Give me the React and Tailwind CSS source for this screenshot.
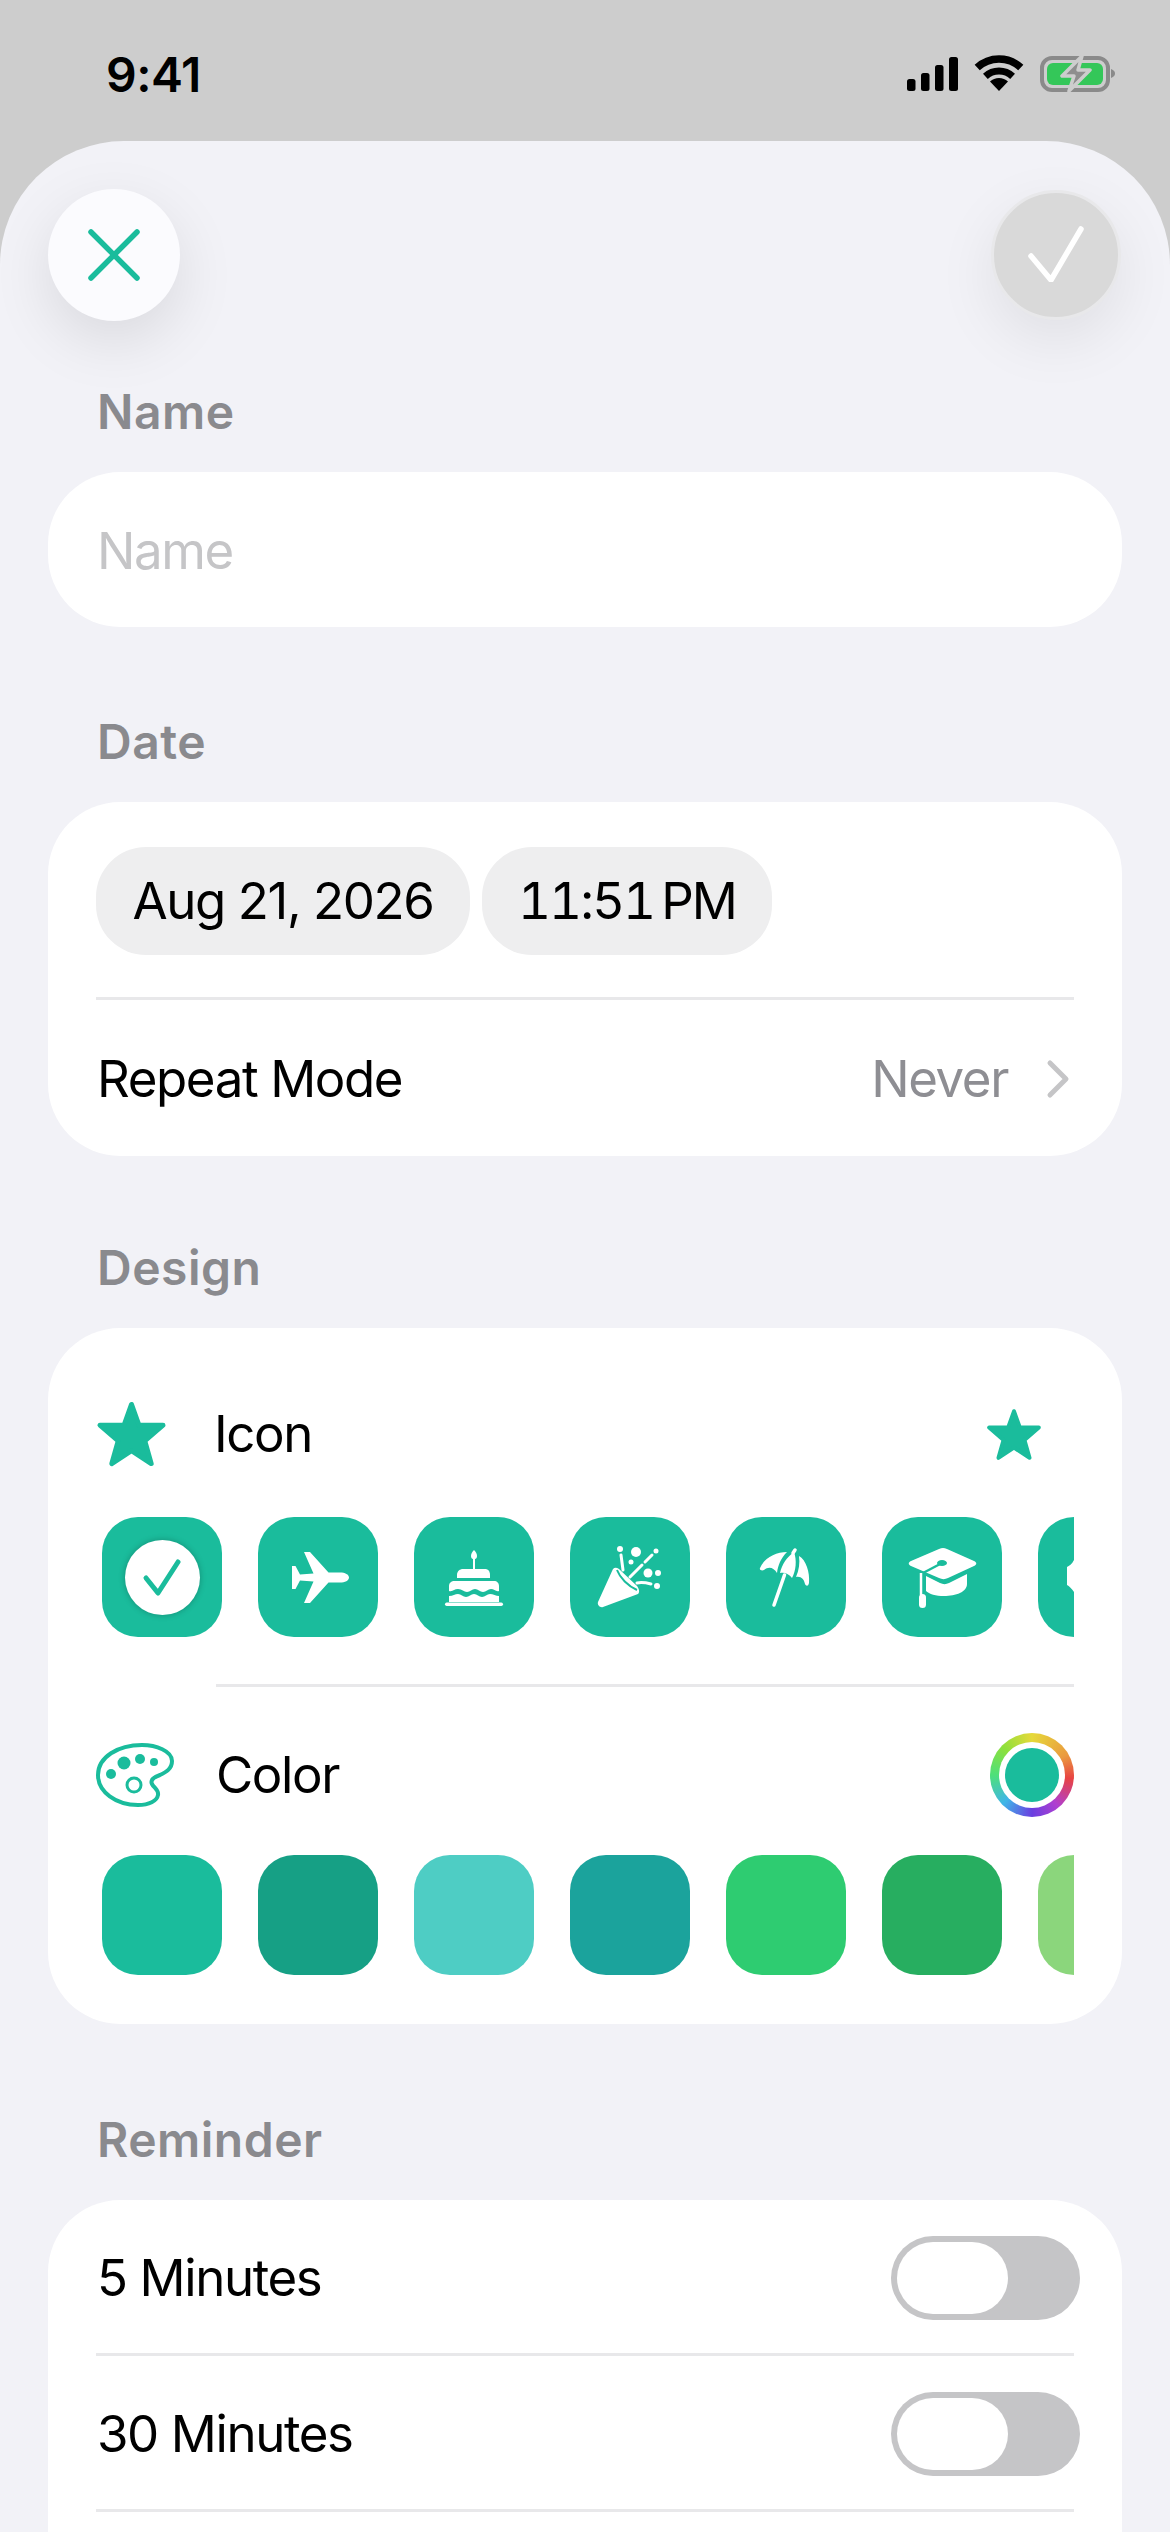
import React from 'react';

const TEAL = '#1abc9c';

const Star = ({ className }) => (
  <svg viewBox="0 0 72 68" className={className}>
    <path
      d="M36 4 L43.5 25 H68 L49.5 41 L56 64 L36 51 L16 64 L22.5 41 L4 25 H28.5 Z"
      fill={TEAL}
      stroke={TEAL}
      strokeWidth="5"
      strokeLinejoin="round"
    />
  </svg>
);

const PlaneIcon = () => (
  <path
    fill="#fff"
    d="M91 60.5c0 3-4 5-9 5H70.5L52 86h-6l9.5-21.5L42 63.5 37.5 72H34V49h3.5L42 57.5l13.5-1L46 35h6l18.5 20.5H82c5 0 9 2 9 5z"
  />
);

const CakeIcon = () => (
  <g fill="#fff">
    <path d="M60 33c2 2 3 4 3 6 0 2-1 3-2 3v10h-2V42c-1 0-2-1-2-3 0-2 1-4 3-6z" />
    <path d="M49 52h22c3 0 5 2 5 6v3H43v-3c0-4 3-6 6-6z" />
    <path d="M41 64h39c3 0 5 2 5 5v5c-3 1-5-2-8-2s-5 3-8 3-5-3-8-3-5 3-8 3-5-3-9-3-5 3-9 2v-5c0-3 2-5 6-5z" />
    <path d="M35 79c4 0 6-2 9-2s5 3 8 3 5-3 8-3 5 3 8 3 5-3 8-3 6 2 9 2v6h-50z" />
    <rect x="31" y="85.500" width="58" height="3.500" rx="1.700" />
  </g>
);

const PartyIcon = () => (
  <g fill="#fff">
    <path d="M43 52c2-2 4-1 6 0l18 17c2 3 3 6 1 8L33 90c-3 1-6-2-5-5z" />
    <path d="M47 53c3 8 11 16 20 20" fill="none" stroke={TEAL} strokeWidth="2" />
    <circle cx="50" cy="32" r="3" />
    <circle cx="66" cy="35" r="5" />
    <circle cx="86" cy="34" r="2.500" />
    <circle cx="61" cy="45" r="2.500" />
    <circle cx="78" cy="56" r="4.500" />
    <circle cx="88" cy="56" r="3" />
    <circle cx="87" cy="69" r="3" />
    <g fill="none" stroke="#fff" strokeWidth="3" strokeLinecap="round">
      <path d="M75 45l7-7" />
      <path d="M51 38l2 15" />
      <path d="M72 48L60 60" />
      <path d="M67 66c5-1 10 0 14 1" />
    </g>
  </g>
);

const UmbrellaIcon = () => (
  <g fill="#fff">
    <path d="M34 51c4-10 16-16 27-16-6 6-9 13-10 21-3-5-8-7-13-3-2 1-5 0-4-2z" />
    <path d="M54 56c2-9 7-16 14-21 3 8 2 19-2 26-3-4-7-6-12-5z" />
    <path d="M73 39c7 4 11 16 10 27-1 4-3 3-4 1-1-5-4-8-9-7 3-7 4-14 3-21z" />
    <path d="M48 88l10.500-30M67 36l2-3" fill="none" stroke="#fff" strokeWidth="3.500" strokeLinecap="round" />
  </g>
);

const CapIcon = () => (
  <g fill="#fff">
    <path d="M57 32c3-1.500 5-1.500 8 0l27 12c3 1.500 3 3.500 0 5L66 61c-3 1.500-6 1.500-9 0L29 49c-3-1.500-3-3.500 0-5z" />
    <path d="M60 46L41 56" fill="none" stroke={TEAL} strokeWidth="2.500" />
    <ellipse cx="60" cy="46" rx="5" ry="3" fill={TEAL} />
    <path d="M44 59l14 7c3 1.500 6 1.500 9 0l18-9v10c0 8-11 12-23 12-8 0-15-2-18-5z" />
    <path d="M39 56v22" fill="none" stroke="#fff" strokeWidth="2.500" />
    <rect x="37" y="77" width="7" height="14" rx="3.500" />
  </g>
);

const SuitcaseIcon = () => (
  <path fill="#fff" d="M36 43c-2 4-5 6-7 7v18c2 1 5 4 7 7h30V43z" />
);

const iconTiles = [PlaneIcon, CakeIcon, PartyIcon, UmbrellaIcon, CapIcon, SuitcaseIcon];

const swatches = [
  { id: 'a', cls: 'bg-[#1abc9c]' },
  { id: 'b', cls: 'bg-[#16a085]' },
  { id: 'c', cls: 'bg-[#4ecdc4]' },
  { id: 'd', cls: 'bg-[#1ba39c]' },
  { id: 'e', cls: 'bg-[#2ecc71]' },
  { id: 'f', cls: 'bg-[#27ae60]' },
  { id: 'g', cls: 'bg-[#8bd67c]' },
];

const Label = ({ children }) => (
  <div className="pl-[49px] h-[60px] mb-[30px] flex items-center text-[48px] font-semibold text-[#8a8a8e] tracking-[0.5px]">
    {children}
  </div>
);

const Divider = ({ className }) => <div className={`h-[3px] bg-[#e8e8ea] ${className}`} />;

const Toggle = () => (
  <div className="w-[189px] h-[84px] p-[6px] rounded-full bg-[#c5c5c7] shrink-0">
    <div className="w-[111px] h-[72px] rounded-full bg-white" />
  </div>
);

const ReminderRow = ({ title }) => (
  <div className="h-[153px] pt-[3px] flex items-center justify-between pl-[49px] pr-[42px]">
    <span>{title}</span>
    <Toggle />
  </div>
);

const StatusBar = () => (
  <div className="h-[141px] shrink-0 flex items-start justify-between pl-[106px] pr-[54px] pt-[45px]">
    <span className="text-[48px] leading-[60px] font-semibold tracking-[-0.5px]">9:41</span>
    <svg viewBox="0 0 209 37" className="w-[209px] h-[37px] mt-[10px]">
      <rect x="0" y="24" width="8.500" height="12" rx="2.500" />
      <rect x="14" y="18" width="8.500" height="18" rx="2.500" />
      <rect x="28" y="10" width="8.500" height="26" rx="2.500" />
      <rect x="42" y="2" width="9" height="34" rx="2.500" />
      <path d="M92 36L83 26.500A13 13 0 0 1 101 26.500Z" />
      <path d="M78.400 21.400A20 20 0 0 1 105.600 21.400" fill="none" stroke="#000" strokeWidth="7" />
      <path d="M70.200 12.600A32 32 0 0 1 113.800 12.600" fill="none" stroke="#000" strokeWidth="7.500" />
      <rect x="135" y="3" width="66" height="32" rx="10" fill="none" stroke="#8a8a8a" strokeWidth="4" />
      <rect x="140" y="8" width="56" height="22" rx="6" fill="#34c759" />
      <path d="M204 14c3 1 4 3 4 4.500s-1 3.500-4 4.500z" fill="#8a8a8a" />
      <path d="M175 1L155 21h12l-5 15 21-21h-12z" fill="#8e8e8e" stroke="#cdcdcd" strokeWidth="3.500" strokeLinejoin="round" />
    </svg>
  </div>
);

export default function App() {
  return (
    <div
      className="w-[1170px] h-[2532px] overflow-hidden flex flex-col bg-[#cdcdcd] text-black text-[51px] tracking-[-1.4px]"
      style={{ fontFamily: 'Inter, "Liberation Sans", sans-serif' }}
    >
      <StatusBar />

      <div className="flex-1 min-h-0 rounded-t-[124px] bg-[#f2f2f7] overflow-hidden">
        {/* top buttons */}
        <div className="flex justify-between pl-[48px] pr-[49px] pt-[48px]">
          <button className="w-[132px] h-[132px] rounded-full bg-[#fbfbfe] flex items-center justify-center shadow-[0_20px_60px_rgba(0,0,0,0.1)]">
            <svg viewBox="0 0 52 52" className="w-[52px] h-[52px]" fill="none" stroke={TEAL} strokeWidth="5.500" strokeLinecap="round">
              <path d="M3 3l46 46M49 3L3 49" />
            </svg>
          </button>
          <button className="w-[130px] h-[130px] mt-[1px] rounded-full bg-[#d9d9d9] border-[3px] border-[#e8e8ea] flex items-center justify-center shadow-[0_20px_60px_rgba(0,0,0,0.08)]">
            <svg viewBox="0 0 56 56" className="w-[56px] h-[56px] mb-[2px]" fill="none" stroke="#fff" strokeWidth="5.500" strokeLinecap="round" strokeLinejoin="round">
              <path d="M3 30l20 24L53 3" />
            </svg>
          </button>
        </div>

        <div className="mt-[61px] px-[48px]">
          <Label>Name</Label>
          <div className="h-[155px] pt-[3px] rounded-[72px] bg-white flex items-center pl-[49px] text-[#c5c5c7]">Name</div>

          <div className="mt-[85px]">
            <Label>Date</Label>
            <div className="h-[354px] rounded-[72px] bg-white pt-[45px] px-[48px]">
              <div className="flex gap-[12px]">
                <div className="w-[374px] h-[108px] rounded-[50px] bg-[#eeeeef] flex items-center justify-center">Aug 21, 2026</div>
                <div className="w-[290px] h-[108px] rounded-[50px] bg-[#eeeeef] flex items-center justify-center tabular-nums tracking-[-2px]">11:51{'\u202F'}PM</div>
              </div>
              <Divider className="mt-[42px]" />
              <div className="h-[156px] pt-[2px] flex items-center justify-between pl-[1px] pr-[4px]">
                <span>Repeat Mode</span>
                <div className="flex items-center gap-[38px] text-[#8e8e93]">
                  <span>Never</span>
                  <svg viewBox="0 0 24 40" className="w-[24px] h-[40px]" fill="none" stroke="#c5c5c7" strokeWidth="5" strokeLinecap="round" strokeLinejoin="round">
                    <path d="M4 4l16 16L4 36" />
                  </svg>
                </div>
              </div>
            </div>
          </div>

          <div className="mt-[82px]">
            <Label>Design</Label>
            <div className="h-[696px] rounded-[72px] bg-white pt-[72px] px-[48px]">
              <div className="h-[68px] flex items-center">
                <Star className="w-[71px] h-[68px]" />
                <span className="ml-[47px] flex-1">Icon</span>
                <Star className="w-[56px] h-[53px] mr-[32px]" />
              </div>

              <div className="mt-[49px] pl-[6px] flex gap-[36px] overflow-hidden">
                <div className="w-[120px] h-[120px] shrink-0 rounded-[36px] bg-[#1abc9c] flex items-center justify-center">
                  <div className="w-[75px] h-[75px] rounded-full bg-white shadow-[0_0_6px_rgba(0,0,0,0.25)] flex items-center justify-center">
                    <svg viewBox="0 0 40 40" className="w-[40px] h-[40px]" fill="none" stroke={TEAL} strokeWidth="5" strokeLinecap="round" strokeLinejoin="round">
                      <path d="M4 21l12 15L36 5" />
                    </svg>
                  </div>
                </div>
                {iconTiles.map((Glyph, i) => (
                  <div key={i} className="w-[120px] h-[120px] shrink-0 rounded-[36px] bg-[#1abc9c]">
                    <svg viewBox="0 0 120 120" className="w-[120px] h-[120px]">
                      <Glyph />
                    </svg>
                  </div>
                ))}
              </div>

              <Divider className="mt-[47px] ml-[120px]" />

              <div className="h-[84px] mt-[46px] flex items-center">
                <svg viewBox="0 0 78 64" className="w-[78px] h-[64px]" fill={TEAL}>
                  <path
                    d="M46 2C60 2 76 8 76 18c0 8-6 11-12 14-6 2-10 5-8 9 2 4 7 6 6 11-1 6-9 10-20 10C20 62 2 49 2 32 2 14 22 2 46 2z"
                    fill="none"
                    stroke={TEAL}
                    strokeWidth="4"
                  />
                  <circle cx="28" cy="20" r="6.500" />
                  <circle cx="44" cy="16" r="5" />
                  <circle cx="58" cy="19" r="4" />
                  <circle cx="15" cy="31" r="5" />
                  <circle cx="38" cy="42" r="7" fill="none" stroke={TEAL} strokeWidth="3" />
                </svg>
                <span className="ml-[42px] flex-1">Color</span>
                <div className="w-[84px] h-[84px] p-[9px] rounded-full bg-[conic-gradient(#e6d93a,#ea9a3f_60deg,#e84343_95deg,#b03fd0_140deg,#6a3fe0_180deg,#3fb5e8_225deg,#4ee07a_270deg,#8fe03a_315deg,#e6d93a)]">
                  <div className="w-full h-full p-[6px] rounded-full bg-white">
                    <div className="w-full h-full rounded-full bg-[#1abc9c]" />
                  </div>
                </div>
              </div>

              <div className="mt-[38px] pl-[6px] flex gap-[36px] overflow-hidden">
                {swatches.map((s) => (
                  <div key={s.id} className={`w-[120px] h-[120px] shrink-0 rounded-[36px] ${s.cls}`} />
                ))}
              </div>
            </div>
          </div>

          <div className="mt-[86px]">
            <Label>Reminder</Label>
            <div className="h-[400px] rounded-t-[72px] bg-white">
              <ReminderRow title="5 Minutes" />
              <Divider className="ml-[48px] mr-[48px]" />
              <ReminderRow title="30 Minutes" />
              <Divider className="ml-[48px] mr-[48px]" />
            </div>
          </div>
        </div>
      </div>
    </div>
  );
}
